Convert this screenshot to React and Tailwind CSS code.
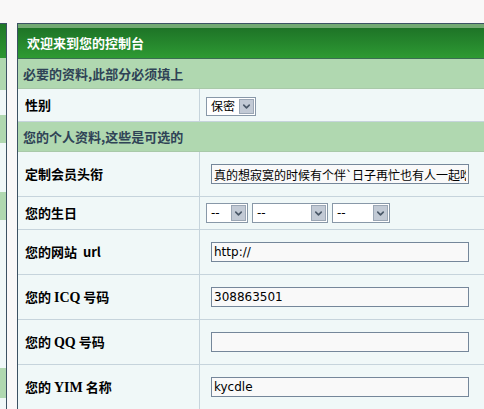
import { ChevronDown } from "lucide-react";

const cjk = { fontFamily: '"Noto Sans CJK SC", "Noto Sans", sans-serif' };
const field = { fontFamily: '"DejaVu Sans", "Noto Sans CJK SC", sans-serif' };
const latin = { fontFamily: '"Liberation Serif", serif' };

// left menu column, only its edge is in view
const sideBands = [
  { h: "h-[34px]", c: "bg-gradient-to-b from-[#1f7727] to-[#2d9631]" },
  { h: "h-[32px]", c: "bg-[#b0d8b0]" },
  { h: "h-[25px]", c: "bg-[#f0f8f8]" },
  { h: "h-[28px]", c: "bg-[#b0d8b0]" },
  { h: "h-[49px]", c: "bg-[#f0f8f8]" },
  { h: "h-[28px]", c: "bg-[#b0d8b0]" },
  { h: "h-[148px]", c: "bg-[#f0f8f8]" },
  { h: "h-[30px]", c: "bg-[#b0d8b0]" },
  { h: "flex-1", c: "bg-[#f0f8f8]" },
];

const Select = ({ label, width, height = "h-[20px]" }) => (
  <div
    className={`flex ${height} ${width} items-stretch border border-[#8898a8] bg-white`}
  >
    <span className="flex flex-1 items-center pl-[4px] text-[12px] text-black" style={field}>
      {label}
    </span>
    <span className="m-[1px] flex w-[15px] items-center justify-center border border-[#9ba7b5] bg-[#c2cad5]">
      <ChevronDown size={11} strokeWidth={3.5} color="#4a5868" />
    </span>
  </div>
);

const TextInput = ({ value }) => (
  <input
    readOnly
    value={value}
    className="h-[20px] w-[258px] border border-[#75879a] bg-[#f9f9f9] px-[2px] text-[12px] text-black outline-none"
    style={field}
  />
);

const Row = ({ label, height = "h-[45px]", pad = "pl-[11px]", children }) => (
  <div className={`flex ${height} border-b border-[#c6d4dc] bg-[#f0f8f8]`}>
    <div
      className="flex w-[182px] shrink-0 items-center whitespace-pre border-r border-[#c6d4dc] pl-[7px] text-[13px] font-bold text-black"
      style={cjk}
    >
      {label}
    </div>
    <div className={`flex flex-1 items-center gap-[4px] ${pad}`}>{children}</div>
  </div>
);

const Section = ({ children }) => (
  <div
    className="flex h-[30px] items-center border-b border-[#a9c9a9] bg-[#b0d8b0] pl-[5px] text-[13px] font-bold text-[#2f4356]"
    style={cjk}
  >
    {children}
  </div>
);

export default function App() {
  return (
    <div className="flex h-[409px] w-[484px] overflow-hidden bg-[#f9f8f8] pt-[23px]">
      <aside className="flex w-[7px] shrink-0 flex-col border-r border-t border-[#3c5263]">
        {sideBands.map((b, i) => (
          <div key={i} className={`${b.h} ${b.c}`} />
        ))}
      </aside>

      <div className="ml-[10px] w-[490px] shrink-0 border-l border-t border-[#3c5263]">
        <div
          className="flex h-[35px] items-center border-b border-[#3b6e52] border-t-[4px] border-t-[#73aa73] bg-gradient-to-b from-[#1e7427] to-[#2e9a33] pl-[9px] text-[13px] font-bold text-white"
          style={cjk}
        >
          欢迎来到您的控制台
        </div>

        <Section>必要的资料,此部分必须填上</Section>
        <Row label="性别" height="h-[33px]" pad="pl-[6px] pt-[3px]">
          <Select label="保密" width="w-[50px]" height="h-[19px]" />
        </Row>

        <Section>您的个人资料,这些是可选的</Section>
        <Row label="定制会员头衔">
          <TextInput value="真的想寂寞的时候有个伴`日子再忙也有人一起吃饭" />
        </Row>
        <Row label="您的生日" height="h-[33px]" pad="pl-[6px]">
          <Select label="--" width="w-[42px]" />
          <Select label="--" width="w-[76px]" />
          <Select label="--" width="w-[58px]" />
        </Row>
        <Row label="您的网站  url">
          <TextInput value="http://" />
        </Row>
        <Row label={<>您的 <span className="text-[14px]" style={latin}>ICQ</span> 号码</>}>
          <TextInput value="308863501" />
        </Row>
        <Row label={<>您的 <span className="text-[14px]" style={latin}>QQ</span> 号码</>}>
          <TextInput value="" />
        </Row>
        <Row label={<>您的 <span className="text-[14px]" style={latin}>YIM</span> 名称</>}>
          <TextInput value="kycdle" />
        </Row>
      </div>
    </div>
  );
}
